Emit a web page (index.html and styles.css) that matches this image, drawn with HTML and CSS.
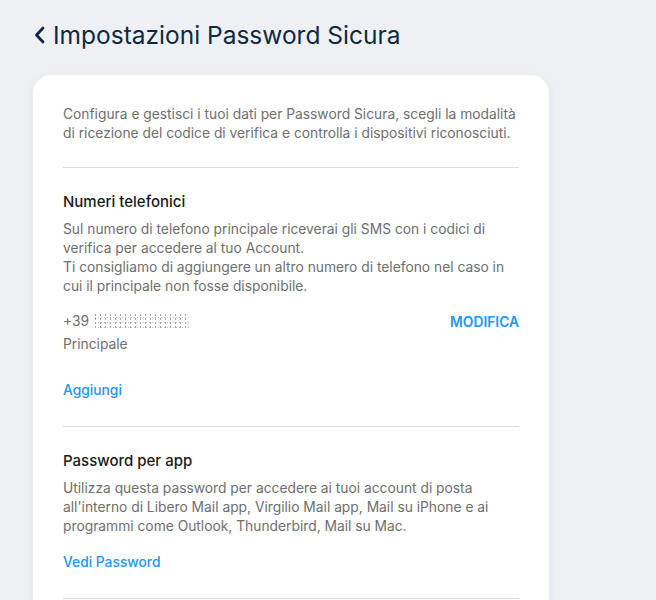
FILE: index.html
```html
<!DOCTYPE html>
<html lang="it">
<head>
    <meta charset="UTF-8">
    <meta name="viewport" content="width=device-width, initial-scale=1.0">
    <title>Impostazioni Password Sicura</title>
    <link rel="stylesheet" href="styles.css">
</head>
<body>

<div class="page">
    <h1 class="page-title">
        <svg class="back-icon" width="14" height="20" viewBox="0 0 14 20">
            <path d="M10 3 L3.5 10 L10 17" fill="none" stroke="#0d2a45" stroke-width="2.8" stroke-linecap="round" stroke-linejoin="round"/>
        </svg>
        Impostazioni Password Sicura
    </h1>

    <div class="card">
        <p class="intro">Configura e gestisci i tuoi dati per Password Sicura, scegli la modalità di ricezione del codice di verifica e controlla i dispositivi riconosciuti.</p>

        <div class="section">
            <h2>Numeri telefonici</h2>
            <p class="desc">Sul numero di telefono principale riceverai gli SMS con i codici di verifica per accedere al tuo Account.<br>Ti consigliamo di aggiungere un altro numero di telefono nel caso in cui il principale non fosse disponibile.</p>

            <div class="phone-row">
                <div class="phone">
                    <div class="phone-number">+39 <span class="masked"></span></div>
                    <div class="phone-label">Principale</div>
                </div>
                <a class="link upper" href="#">MODIFICA</a>
            </div>

            <a class="link add" href="#">Aggiungi</a>
        </div>

        <div class="section last">
            <h2>Password per app</h2>
            <p class="desc">Utilizza questa password per accedere ai tuoi account di posta all'interno di Libero Mail app, Virgilio Mail app, Mail su iPhone e ai programmi come Outlook, Thunderbird, Mail su Mac.</p>
            <a class="link" href="#">Vedi Password</a>
        </div>
    </div>
</div>

</body>
</html>
```

FILE: styles.css
```css
body {
    font-family: Inter, "Noto Sans", Arial, sans-serif;
    background-color: #eef0f4;
    margin: 0;
}

.page {
    padding: 19px 0 0 33px;
    width: 516px;
}

.page-title {
    display: flex;
    align-items: center;
    gap: 6px;
    margin: 0 0 24px;
    font-size: 24.5px;
    font-weight: 400;
    color: #0d2a45;
    line-height: 32px;
}

.back-icon {
    display: block;
}

.card {
    background-color: #ffffff;
    border-radius: 18px;
    box-shadow: 0 2px 8px rgba(0, 0, 0, 0.06);
    padding: 30px 30px 40px;
}

.intro {
    margin: 0;
    padding-bottom: 24px;
    font-size: 13.8px;
    line-height: 19px;
    color: #6e6e6e;
}

.section {
    border-top: 1px solid #dddddd;
    padding: 24px 0 26px;
}

.section.last {
    border-bottom: 1px solid #dddddd;
}

.section h2 {
    margin: 0 0 8px;
    font-size: 15px;
    font-weight: 500;
    line-height: 20px;
    color: #1a1a1a;
}

.desc {
    margin: 0;
    font-size: 13.8px;
    line-height: 19px;
    color: #6e6e6e;
}

.phone-row {
    display: flex;
    justify-content: space-between;
    align-items: flex-start;
    margin-top: 14px;
}

.phone-number,
.phone-label {
    font-size: 13.8px;
    line-height: 23px;
    color: #6e6e6e;
}

.masked {
    display: inline-block;
    width: 96px;
    height: 16px;
    vertical-align: -3px;
    background-image:
        radial-gradient(circle, #8a8a8a 0.7px, transparent 1px),
        radial-gradient(circle, #b0b0b0 0.6px, transparent 1px);
    background-size: 5px 4px, 3px 5px;
    background-position: 0 0, 1px 2px;
    opacity: 0.8;
}

.link {
    display: inline-block;
    font-size: 13.8px;
    font-weight: 500;
    line-height: 19px;
    color: #2196f3;
    text-decoration: none;
    margin-top: 17px;
}

.link.upper {
    margin-top: 3px;
    font-weight: 600;
}

.link.add {
    margin-top: 25px;
}
```
